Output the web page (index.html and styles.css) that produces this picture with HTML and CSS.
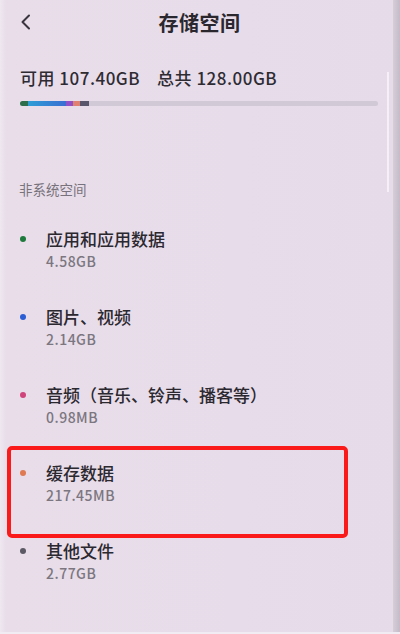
FILE: index.html
```html
<!DOCTYPE html>
<html lang="zh-CN">
<head>
<meta charset="utf-8">
<link rel="stylesheet" href="styles.css">
</head>
<body>
<div class="screen">
  <div class="content">
    <header class="header">
      <span class="back">
        <svg width="12" height="16" viewBox="0 0 12 16"><path d="M9 1.5 L2.5 8 L9 14.5" fill="none" stroke="#3a3640" stroke-width="2" stroke-linecap="round" stroke-linejoin="round"/></svg>
      </span>
      <h1 class="title">存储空间</h1>
      <span class="spacer"></span>
    </header>
    <div class="summary">可用 107.40GB<span class="gap"></span>总共 128.00GB</div>
    <div class="bar">
      <span class="seg green"></span>
      <span class="seg blue"></span>
      <span class="seg purple"></span>
      <span class="seg orange"></span>
      <span class="seg gray"></span>
    </div>
    <div class="label">非系统空间</div>
    <ul class="list">
      <li class="item"><span class="dot d-green"></span><div class="txt"><div class="name">应用和应用数据</div><div class="size">4.58GB</div></div></li>
      <li class="item"><span class="dot d-blue"></span><div class="txt"><div class="name">图片、视频</div><div class="size">2.14GB</div></div></li>
      <li class="item"><span class="dot d-pink"></span><div class="txt"><div class="name">音频（音乐、铃声、播客等）</div><div class="size">0.98MB</div></div></li>
      <li class="item"><span class="dot d-orange"></span><div class="txt"><div class="name">缓存数据</div><div class="size">217.45MB</div></div></li>
      <li class="item"><span class="dot d-gray"></span><div class="txt"><div class="name">其他文件</div><div class="size">2.77GB</div></div></li>
    </ul>
  </div>
  <div class="edge"></div>
  <div class="highlight"></div>
  <div class="redbox"></div>
</div>
</body>
</html>
```
FILE: styles.css
```css
html, body {
  margin: 0;
  padding: 0;
}
body {
  width: 400px;
  height: 634px;
  overflow: hidden;
  background: #e7dce9;
  font-family: "Noto Sans CJK SC", "Noto Sans", sans-serif;
  color: #2c2930;
}
.screen {
  position: relative;
  width: 400px;
  height: 634px;
  display: flex;
  background: linear-gradient(90deg, #efe7f1 0px, #e8dde9 6px, #e7dce9 60%, #e6dbe8 100%);
  border-bottom: 2px solid #f1ebf3;
  box-sizing: border-box;
}
.content {
  flex: 1;
  display: flex;
  flex-direction: column;
}
.edge {
  width: 7px;
  background: linear-gradient(90deg, #d6cdd9, #c4bbc8);
}
.header {
  height: 44px;
  display: grid;
  grid-template-columns: 63px 1fr 57px;
  align-items: center;
}
.back {
  display: flex;
  padding-left: 20px;
}
.title {
  margin: 0;
  text-align: center;
  font-size: 20px;
  font-weight: 700;
  color: #2a272e;
  letter-spacing: 0.5px;
}
.summary {
  margin: 22px 0 0 20px;
  font-size: 17px;
  line-height: 24px;
  font-weight: 500;
  color: #2e2b33;
  letter-spacing: 0.5px;
}
.gap {
  display: inline-block;
  width: 17px;
}
.bar {
  margin: 11px 15px 0 20px;
  height: 5px;
  border-radius: 3px;
  background: #d2c9d6;
  display: flex;
  overflow: hidden;
}
.seg { height: 100%; }
.green { width: 8px; background: #2f6e4a; }
.blue { width: 38px; background: linear-gradient(90deg, #2e9ed6, #3a6ed2); }
.purple { width: 7px; background: #9050c8; }
.orange { width: 7px; background: #e08070; }
.gray { width: 9px; background: #5a566c; }
.label {
  margin: 74px 0 0 19px;
  font-size: 13.5px;
  line-height: 18px;
  color: #77727c;
}
.list {
  list-style: none;
  margin: 28px 0 0 0;
  padding: 0;
  display: flex;
  flex-direction: column;
  gap: 32px;
}
.item {
  display: flex;
  align-items: flex-start;
  padding-left: 20px;
}
.dot {
  width: 6px;
  height: 6px;
  border-radius: 50%;
  margin-top: 9.5px;
  flex: none;
}
.d-green { background: #1e7a3c; }
.d-blue { background: #2b5dd4; }
.d-pink { background: #d0447c; }
.d-orange { background: #e07a52; }
.d-gray { background: #5c5864; }
.txt {
  margin-left: 20px;
}
.name {
  font-size: 17px;
  line-height: 25px;
  font-weight: 500;
  color: #2b2830;
}
.size {
  font-size: 14px;
  line-height: 21px;
  color: #7b7680;
  font-weight: 500;
  letter-spacing: 0.5px;
}
.highlight {
  position: absolute;
  left: 387px;
  top: 72px;
  width: 2px;
  height: 120px;
  background: #f6eff7;
}
.redbox {
  position: absolute;
  left: 7px;
  top: 446px;
  width: 341px;
  height: 92px;
  box-sizing: border-box;
  border: 4px solid #fb1a1a;
  border-radius: 5px;
}
```
